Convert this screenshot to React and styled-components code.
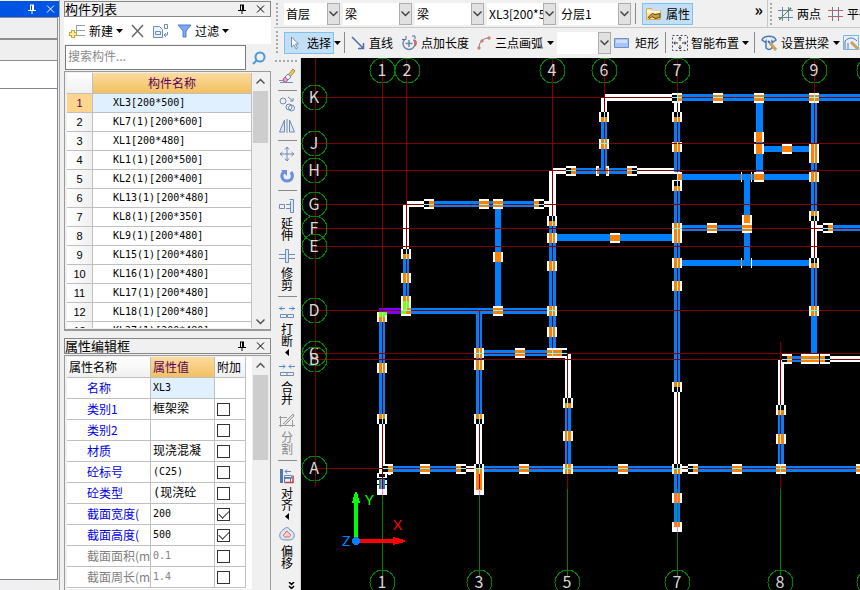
import React, { useState } from 'react';
import styled, { createGlobalStyle } from 'styled-components';

const GlobalStyle = createGlobalStyle`
  * { box-sizing: border-box; }
  body {
    margin: 0;
    overflow: hidden;
    background: #f0f0f0;
    font: 12px/16px "Noto Sans CJK SC", sans-serif;
    color: #000;
  }
  button, input, select { font: inherit; color: inherit; margin: 0; padding: 0; }
  button { background: none; border: 0; }
`;

const Shell = styled.div`
  display: grid;
  grid-template-columns: 60px 208px minmax(0, 1fr);
  grid-template-rows: minmax(0, 1fr);
  column-gap: 3px;
  height: 100vh;
`;

/* left navigation panel */
const Nav = styled.aside`
  display: flex;
  flex-direction: column;
  border-right: 1px solid #a0a0a0;
`;

const NavTitle = styled.header`
  display: flex;
  justify-content: flex-end;
  align-items: center;
  gap: 8px;
  height: 16px;
  margin-top: 1px;
  padding-right: 3px;
  background: #0054e3;
  color: #fff;
`;

const NavBar = styled.div`
  height: 22px;
  margin-right: 1px;
  background: #efefef;
  border: solid #8c8c8c;
  border-width: 1px 1px 1px 0;
`;

const NavBody = styled.div`
  flex: ${(p) => (p.$grow ? '1' : '0 0 28px')};
  background: #fff;
  border: solid #828790;
  border-width: 0 1px 1px 0;
  margin: ${(p) => (p.$grow ? '0 1px 10px 0' : '0 1px 0 0')};
`;

/* docked panels */
const Dock = styled.div`
  display: grid;
  grid-template-rows: minmax(0, 331px) minmax(0, 1fr);
  row-gap: 6px;
  padding-left: 1px;
`;

const Panel = styled.section`
  display: flex;
  flex-direction: column;
  min-height: 0;
`;

const PanelTitle = styled.header`
  display: flex;
  align-items: center;
  gap: 8px;
  flex: 0 0 16px;
  margin-top: 1px;
  padding-right: 4px;
  border: 1px solid #868686;
  h2 {
    flex: 1;
    margin: 0;
    font-size: 13px;
    font-weight: 400;
    line-height: 14px;
  }
`;

const TitleButton = styled.button`
  width: 10px;
  height: 10px;
  display: flex;
`;

const ListTools = styled.div`
  display: flex;
  align-items: center;
  flex: 0 0 27px;
  gap: 8px;
  padding-left: 5px;
  background: #fff;
`;

const Tool = styled.button`
  display: flex;
  align-items: center;
  gap: 3px;
  white-space: nowrap;
`;

const Search = styled.form`
  display: flex;
  flex: 0 0 25px;
  margin: 1px 0 1px 1px;
  input {
    flex: 1;
    min-width: 0;
    padding: 0 2px 3px;
    border: 1px solid #7a7a7a;
    background: #fff;
    outline: 0;
  }
  input::placeholder { color: #8a8a8a; opacity: 1; }
  button { width: 25px; display: grid; place-content: center; }
`;

const TableFrame = styled.div`
  display: flex;
  flex: 1;
  min-height: 0;
  overflow: hidden;
  margin-top: ${(p) => p.$top}px;
  padding: 1px 2px 0 2px;
  background: #f0f0f0;
  border: 1px solid #9a9a9a;
  border-bottom-width: ${(p) => (p.$open ? 0 : '2px')};
`;

const TableClip = styled.div`
  flex: 1;
  min-width: 0;
  overflow: hidden;
  background: #fff;
  margin-bottom: 1px;
`;

const Table = styled.table`
  width: ${(p) => p.$width || '100%'};
  table-layout: fixed;
  border-spacing: 0;
  th, td {
    height: ${(p) => p.$row}px;
    padding: 0 2px;
    border: solid #c0c0c0;
    border-width: 0 1px 1px 0;
    font-weight: 400;
    line-height: ${(p) => p.$row - 1}px;
    text-align: left;
    white-space: nowrap;
    overflow: hidden;
  }
  thead th {
    height: 21px;
    line-height: 20px;
    background: linear-gradient(#fff, #f0f0f0);
  }
`;

const ActiveHead = styled.th`
  &&& {
    background: linear-gradient(#fbdba0, #f2c060);
    color: #5c005c;
    text-align: ${(p) => (p.$center ? 'center' : 'left')};
  }
`;

const RowNumber = styled.th`
  && {
    text-align: center;
    background: ${(p) => (p.$on ? '#ffd58d' : 'linear-gradient(90deg, #fff, #f0f0f0)')};
    color: ${(p) => (p.$on ? '#5c005c' : '#000')};
    font: 11px/18px "Liberation Sans", sans-serif;
  }
`;

const Code = styled.td`
  && {
    padding-left: ${(p) => (p.$indent ? '20px' : '2px')};
    background: ${(p) => (p.$on ? '#e0f0ff' : '#fff')};
    color: ${(p) => (p.$dim ? '#808080' : '#000')};
    font-family: "DejaVu Sans Mono", "Noto Sans CJK SC", monospace;
    font-size: ${(p) => (p.$cjk ? '12px' : '10px')};
  }
`;

const PropName = styled.th`
  && {
    padding-left: 20px;
    padding-right: 0;
    color: ${(p) => (p.$dim ? '#808080' : '#0000e8')};
  }
`;

const Check = styled.input`
  appearance: none;
  display: grid;
  place-content: center;
  width: 13px;
  height: 13px;
  border: 1px solid #333;
  background: #fff;
  &:checked::after {
    content: '';
    width: 9px;
    height: 5px;
    border: solid #333;
    border-width: 0 0 1px 1px;
    transform: rotate(-45deg);
    margin-top: -3px;
  }
`;

const ScrollTrack = styled.div`
  display: flex;
  flex-direction: column;
  align-items: center;
  width: 15px;
  margin-left: ${(p) => p.$gap}px;
  padding: 5px 0 4px;
  background: #f0f0f0;
  color: #505050;
`;

const ScrollThumb = styled.div`
  width: 15px;
  height: ${(p) => p.$size}px;
  margin: 6px 0 auto;
  background: #cdcdcd;
`;

/* drawing area and its bars */
const Work = styled.main`
  display: grid;
  grid-template-rows: 28px 30px minmax(0, 1fr);
  min-width: 0;
`;

const Bar = styled.div`
  display: flex;
  align-items: center;
  min-width: 0;
  overflow: hidden;
  border-bottom: 1px solid ${(p) => (p.$line ? '#c8c8c8' : '#f0f0f0')};
`;

const Grip = styled.div`
  flex: 0 0 2px;
  align-self: stretch;
  margin: 3px 6px 2px 2px;
  background: repeating-linear-gradient(#a8a8a8 0 2px, #f0f0f0 2px 4px);
`;

const Combo = styled.div`
  display: flex;
  flex: none;
  width: ${(p) => p.$width}px;
  height: 22px;
  margin-right: 3px;
  background: #fff;
  select {
    appearance: none;
    flex: 1 1 0;
    width: 0;
    min-width: 0;
    padding: 0 0 0 2px;
    border: 0;
    background: #fff;
    outline: 0;
    overflow: hidden;
    text-overflow: clip;
  }
  span {
    display: grid;
    flex: none;
    place-content: center;
    width: 13px;
    background: #e1e1e1;
    border: 1px solid #adadad;
    color: #444;
  }
`;

const BarButton = styled.button`
  display: flex;
  align-items: center;
  flex: none;
  gap: ${(p) => p.$gap || 4}px;
  height: 22px;
  margin-right: ${(p) => p.$after || 0}px;
  padding: 0 ${(p) => (p.$on ? 2 : 0)}px;
  border: ${(p) => (p.$on ? '1px solid #7cc0f4' : '0')};
  background: ${(p) => (p.$on ? '#c2dff5' : 'none')};
  white-space: nowrap;
`;

const Divider = styled.i`
  flex: 0 0 1px;
  height: 21px;
  margin: 0 6px 0 ${(p) => p.$before || 2}px;
  background: #8a8a8a;
`;

const More = styled.button`
  margin: -10px 4px 0 auto;
  font-weight: 700;
  font-size: 16px;
`;

const SideBar = styled.div`
  display: flex;
  flex: none;
  align-items: center;
  align-self: stretch;
  width: 93px;
  overflow: hidden;
  border-left: 1px solid #c8c8c8;
`;

const Stage = styled.div`
  display: grid;
  grid-template-columns: 27px minmax(0, 1fr);
  grid-template-rows: minmax(0, 1fr);
  min-height: 0;
`;

const Strip = styled.div`
  display: flex;
  flex-direction: column;
  align-items: center;
  overflow: hidden;
  border-right: 1px solid #d8d8d8;
`;

const StripGrip = styled.div`
  flex: 0 0 2px;
  width: 24px;
  margin: 2px 0 3px;
  background: repeating-linear-gradient(90deg, #a8a8a8 0 2px, #f0f0f0 2px 4px);
`;

const StripButton = styled.button`
  display: flex;
  flex-direction: column;
  align-items: center;
  flex: none;
  width: 20px;
  height: ${(p) => (p.$menu ? 58 : p.$label ? 50 : 22)}px;
  padding-top: ${(p) => (p.$label ? 5 : 3)}px;
  color: ${(p) => (p.disabled ? '#8c8c8c' : '#000')};
  svg { flex: none; }
  span { width: 12px; margin: 3px 0 2px; line-height: 12px; word-break: break-all; }
`;

const StripLine = styled.i`
  flex: 0 0 1px;
  width: 19px;
  margin: 3px 0 2px;
  background: #8a8a8a;
`;

const StripMore = styled.button`
  display: flex;
  flex: none;
  margin: auto 0 1px 8px;
`;

const Drawing = styled.svg`
  display: block;
  width: 100%;
  height: 100%;
  background: #000;
`;

const Icon = ({ w = 16, h = 16, children }) => (
  <svg width={w} height={h} viewBox={`0 0 ${w} ${h}`} fill="none" stroke="#6f8cb4" aria-hidden="true">
    {children}
  </svg>
);

const Caret = () => (
  <svg width="7" height="4" viewBox="0 0 7 4" aria-hidden="true"><path d="M0 0h7L3.500 4z" fill="#000" /></svg>
);

const Chevron = ({ up }) => (
  <svg width="9" height="7" viewBox="0 0 9 7" fill="none" stroke="currentColor" strokeWidth="1.500" aria-hidden="true">
    <path d={up ? 'M.5 5.500l4-4 4 4' : 'M.5 1.500l4 4 4-4'} />
  </svg>
);

const PinClose = () => (
  <>
    <TitleButton aria-label="固定">
      <svg width="8" height="10" fill="none" stroke="currentColor"><path d="M2 1h4M2.500 1v5M5.500 1v5M4.500 1v5M0 6.500h8M4 7v3" /></svg>
    </TitleButton>
    <TitleButton aria-label="关闭">
      <svg width="9" height="10" fill="none" stroke="currentColor"><path d="M1 1.500l7 7M8 1.500l-7 7" /></svg>
    </TitleButton>
  </>
);

const icons = {
  add: (
    <Icon w={17} h={16}>
      <path d="M7 2.500h9M7 7.500h9M7 12.500h9M7.500 2v11" stroke="#8aa0bd" />
      <path d="M4 7v8M0 11h8" stroke="#c9a43c" strokeWidth="4" />
      <path d="M4 8v6M1 11h6" stroke="#fff0a0" strokeWidth="2" />
    </Icon>
  ),
  remove: <Icon w={13} h={14}><path d="M1 1l11 12M12 1L1 13" stroke="#666" strokeWidth="1.500" /></Icon>,
  copyList: (
    <Icon w={17} h={15}>
      <path d="M1.500 3.500h6l3 3v8h-9z" fill="#eef3fa" />
      <path d="M3.500 8.500h5v3h-5zM12.500 1.500h3v4h-3zM15.500 9v3h-3M14 10l-2 2 2 2" />
    </Icon>
  ),
  filter: (
    <Icon w={15} h={14}><path d="M1 1h13L9 7v6H6V7z" fill="#7fa8ee" stroke="#4f7fd0" /></Icon>
  ),
  search: (
    <Icon w={14} h={14}>
      <circle cx="8" cy="6" r="4.500" stroke="#4a9ad8" strokeWidth="2" />
      <path d="M5 9l-4 4" stroke="#4a9ad8" strokeWidth="2" />
    </Icon>
  ),
  pointer: (
    <Icon w={14}><path d="M4.500 2v10l2.500-2 2 4 1.500-1-2-4h3z" fill="#fff" /></Icon>
  ),
  line: <Icon w={14}><path d="M1 2l11 11M12.500 8v5.500H7" stroke="#4d6fa5" strokeWidth="1.500" /></Icon>,
  pointLen: (
    <Icon>
      <path d="M3.500 4.500a6 6 0 1 0 9 0M8 5v7M4.500 8.500h7" stroke="#6b86b0" strokeWidth="1.500" />
      <path d="M1 4.500h4V1M11 1h3v3" stroke="#4d6fa5" />
      <path d="M14 5l1 3-1 3" stroke="#d86a5a" strokeWidth="2" />
    </Icon>
  ),
  arc: (
    <Icon w={14}>
      <path d="M2 13C2 7 6 3 12 3" stroke="#6b86b0" />
      <path d="M1 12h2v2H1zM4 5h2v2H4zM11 2h2v2h-2z" stroke="#d86a5a" fill="#f5b0a0" />
    </Icon>
  ),
  property: (
    <Icon w={17} h={14}>
      <path d="M1.500 12.500v-11h5l1 2h8v9z" fill="#ffe49c" stroke="#d9a85a" />
      <path d="M2 4.500h13" stroke="#fff" strokeWidth="2" />
      <path d="M3 10.500l4-4 3 1 5-1v4l-5 1-3-2-2 2z" fill="#c9a03a" stroke="#5c4a1c" />
    </Icon>
  ),
  rect: (
    <Icon w={15} h={12}><path d="M.5 1.500h14v9H.5z" fill="#a9c4f4" stroke="#6d8fd0" /><path d="M2 3h11v3H2z" fill="#cfe0ff" stroke="none" /></Icon>
  ),
  smart: (
    <Icon>
      <path d="M.5.5h15v15H.5z" stroke="#446" strokeDasharray="2 2" />
      <path d="M8 2v4M8 10v4M2 8h4M10 8h4M6.500 3.500L8 2l1.500 1.500M6.500 12.500L8 14l1.500-1.500M3 6.500L2 8l1 1.500M13 6.500L14 8l-1 1.500" stroke="#334" />
    </Icon>
  ),
  arch: (
    <Icon>
      <path d="M1 5c2-5 12-5 14 0l-3 2-1-1v7c-2 2-4 2-6 0V6L4 7z" stroke="#5078b4" fill="#e6effb" strokeWidth="1.500" />
      <path d="M9 8l6 7" stroke="#c9a25c" strokeWidth="3" />
      <path d="M7 6l2 2" stroke="#4d6fa5" strokeWidth="2" />
    </Icon>
  ),
  curve: (
    <Icon w={17}>
      <path d="M.5.5h15v14H.5z" fill="#e6effb" stroke="#7cb4e0" />
      <path d="M2 14V6c4-4 8-4 12 0M5 14V8" stroke="#5078b4" />
      <path d="M8 7l7 7" stroke="#c9a25c" strokeWidth="3" />
    </Icon>
  ),
  twoPoint: (
    <Icon w={15}>
      <path d="M4.500 1v14M10.500 1v14M0 4.500h15M0 11.500h15" stroke="#6f85a8" />
      <path d="M1 14L13 2" stroke="#4d8a4d" />
      <path d="M2 12h1v1H2zM12 2h1v1h-1z" fill="#4d8a4d" stroke="#4d8a4d" />
    </Icon>
  ),
  parallel: (
    <Icon w={15}>
      <path d="M4.500 1v14M10.500 1v14" stroke="#5f7cab" />
      <path d="M0 4.500h15M0 10.500h15" stroke="#c0605c" />
    </Icon>
  ),
  erase: (
    <Icon>
      <path d="M9 7l5-6 2 2-5 6z" fill="#f0c860" stroke="#a88840" />
      <path d="M6 9l3-3 3 3-3 3z" fill="#e8f0fa" stroke="#6b86b0" />
      <path d="M4 11l2-2 3 3-2 2H5z" fill="#f09cc0" stroke="#b06088" />
      <path d="M0 12.500h4M1 14.500h13" />
    </Icon>
  ),
  copy: (
    <Icon>
      <circle cx="4" cy="5" r="3" /><circle cx="10" cy="11" r="3" /><circle cx="12.500" cy="12" r="3" />
      <path d="M9 1l5 4M14 2v3h-3" />
    </Icon>
  ),
  mirror: <Icon><path d="M5.500 2v12H.5zM10.500 2v12h5zM8 1v14" fill="#dbe7f7" /></Icon>,
  move: <Icon><path d="M8 1v14M1 8h14M6 3.500L8 1l2 2.500M6 12.500L8 15l2-2.500M3.500 6L1 8l2.500 2M12.500 6L15 8l-2.500 2" /></Icon>,
  rotate: (
    <Icon>
      <path d="M5 4C1 7 3 13 8 13s7-5 4-9" stroke="#6a90de" strokeWidth="3" />
      <path d="M2 2h6v6z" fill="#6a90de" stroke="none" />
    </Icon>
  ),
  extend: <Icon><path d="M.5 6.500h5v4h-5zM7 6.500h5M7 10.500h5" /><path d="M10.500 1.500h4v13h-3v-11" fill="#dbe7f7" /></Icon>,
  trim: <Icon><path d="M0 6.500h6M0 10.500h6M10 6.500h6M10 10.500h6" /><path d="M6.500 1.500h3v13h-3z" fill="#dbe7f7" /></Icon>,
  breakAt: (
    <Icon><path d="M0 4.500h6M10 4.500h6M3 2.500l-2 2 2 2M13 2.500l2 2-2 2" stroke="#4f86d8" /><path d="M1.500 10.500h6v3h-6zM8.500 10.500h6v3h-6z" /></Icon>
  ),
  merge: (
    <Icon><path d="M0 4.500h6M10 4.500h6M4 2.500l2 2-2 2M12 2.500l-2 2 2 2" stroke="#4f86d8" /><path d="M1.500 10.500h13v3h-13zM8 10.500v3" /></Icon>
  ),
  split: (
    <Icon><path d="M0 5.500h8M0 13.500h16M1.500 4v11M13.500 8v7M4 12l4-4 6-6 1 2-6 6-3 3" stroke="#999" fill="#ddd" /></Icon>
  ),
  align: (
    <Icon><path d="M1 1h3v14H1z" fill="#5078a8" stroke="none" /><path d="M6 3.500h6M8 1.500l-2 2 2 2" stroke="#4f86d8" /><path d="M5.500 7.500h7v3h-7z" /><path d="M5.500 14.500v-5h6v5z" stroke="#5078b4" /><path d="M6 14.500h8v-7" stroke="#c0404c" strokeWidth="1.500" /></Icon>
  ),
  offset: (
    <Icon>
      <path d="M5 3c2-2 5-2 6 1 3 1 5 4 4 7-1 3-4 3-7 3s-6 0-7-3c-1-3 1-6 4-8z" fill="#dbe7f7" />
      <path d="M7 5.500c2-1 2 1 3 2 2 0 2 3 0 3.500H6c-2-.5-2-3 0-3.500z" stroke="#d86a5a" fill="#f7cfc8" />
    </Icon>
  ),
};

const components = [
  'XL3[200*500]', 'KL7(1)[200*600]', 'XL1[200*480]', 'KL1(1)[200*500]', 'KL2(1)[200*400]',
  'KL13(1)[200*480]', 'KL8(1)[200*350]', 'KL9(1)[200*480]', 'KL15(1)[200*480]',
  'KL16(1)[200*480]', 'KL17(1)[200*480]', 'KL18(1)[200*480]', 'KL27(1)[200*480]',
];

const properties = [
  { name: '名称', value: 'XL3', active: true, noCheck: true },
  { name: '类别1', value: '框架梁', cjk: true },
  { name: '类别2', value: '' },
  { name: '材质', value: '现浇混凝', cjk: true },
  { name: '砼标号', value: '(C25)' },
  { name: '砼类型', value: '(现浇砼', cjk: true },
  { name: '截面宽度(', value: '200', checked: true },
  { name: '截面高度(', value: '500', checked: true },
  { name: '截面面积(m', value: '0.1', dim: true },
  { name: '截面周长(m', value: '1.4', dim: true },
];

const stripTools = [
  { id: 'erase' }, null,
  { id: 'copy' }, { id: 'mirror' }, null,
  { id: 'move' }, { id: 'rotate' }, null,
  { id: 'extend', label: '延伸' }, { id: 'trim', label: '修剪' }, null,
  { id: 'breakAt', label: '打断', menu: true },
  { id: 'merge', label: '合并' },
  { id: 'split', label: '分割', disabled: true }, null,
  { id: 'align', label: '对齐', menu: true },
  { id: 'offset', label: '偏移' },
];

// grid axes: [label, position]
const topAxes = [['1', 382], ['2', 407], ['4', 552], ['6', 604], ['7', 677], ['9', 814], ['10', 869]];
const bottomAxes = [['1', 382], ['3', 479], ['5', 567], ['7', 677], ['8', 780], ['9', 869]];
const rowAxes = [
  ['K', 97], ['J', 143], ['H', 170], ['G', 204], ['F', 228], ['E', 246],
  ['D', 310], ['C', 353], ['B', 359], ['A', 468],
];
// column lines: [x, from, to]
const columns = [
  [382, 58, 489], [406, 58, 311], [552, 58, 353], [604, 58, 170], [677, 58, 489],
  [814, 58, 311], [479, 311, 489], [567, 353, 489], [780, 342, 489],
];

const blue = '#0080ff';
const orange = '#ff8000';

// beams: [x, y, width, height]
const blueBeams = [
  [434, 201, 105, 6], [495, 204, 6, 106], [549, 221, 7, 132], [556, 234, 121, 7],
  [576, 168, 51, 6], [601, 122, 6, 46], [682, 94, 178, 7], [674, 122, 6, 264],
  [756, 98, 7, 79], [764, 146, 47, 6], [682, 174, 132, 6], [744, 177, 6, 85],
  [682, 225, 65, 6], [811, 98, 6, 118], [833, 225, 27, 6], [682, 260, 129, 6],
  [811, 268, 6, 87], [401, 308, 151, 6], [403, 259, 6, 45], [379, 322, 6, 92],
  [476, 311, 6, 106], [484, 350, 68, 6], [565, 408, 6, 60], [778, 415, 6, 53],
  [393, 466, 67, 6], [484, 466, 190, 6], [698, 466, 162, 6], [674, 473, 6, 50],
  [792, 356, 22, 6],
];
const whiteBeams = [
  [406, 201, 18, 6], [403, 205, 6, 44], [544, 201, 8, 6], [549, 171, 7, 45],
  [552, 168, 14, 6], [601, 98, 6, 14], [605, 94, 67, 7], [637, 168, 37, 6],
  [674, 103, 6, 9], [811, 221, 6, 37], [817, 225, 6, 6], [565, 354, 6, 44],
  [830, 356, 30, 6], [778, 360, 6, 45], [379, 424, 6, 49], [476, 424, 6, 40],
  [674, 392, 6, 72], [466, 466, 8, 6], [682, 466, 6, 6],
];

// hinges: [centre x, centre y, direction, open side]
const marks = [
  [429, 204, 'h', 'l'], [484, 204, 'h'], [498, 204, 'h'], [539, 204, 'h', 'r'],
  [552, 221, 'v', 't'], [552, 238, 'v'], [406, 254, 'v', 't'], [498, 257, 'v'],
  [571, 171, 'h', 'l'], [604, 117, 'v', 't'], [604, 144, 'v'], [632, 171, 'h', 'r'],
  [677, 98, 'h', 'l'], [677, 117, 'v', 't'], [677, 147, 'v'], [677, 177, 'h', 'l'],
  [677, 186, 'v', 't'], [677, 228, 'v'], [677, 238, 'v'], [718, 98, 'h'], [759, 98, 'h'],
  [814, 98, 'h'], [759, 137, 'v'], [759, 149, 'v'], [759, 177, 'h'], [787, 149, 'h'],
  [814, 149, 'v'], [814, 158, 'v'], [814, 177, 'v'], [747, 220, 'v'], [747, 228, 'h'],
  [712, 228, 'h'], [814, 216, 'v', 'b'], [828, 228, 'h', 'l'], [615, 238, 'h'],
  [677, 263, 'v'], [677, 286, 'v'], [814, 263, 'v', 't'], [814, 311, 'v'],
  [677, 387, 'v', 'b'], [787, 359, 'h', 'l'], [806, 359, 'h'], [814, 359, 'h'],
  [825, 359, 'h', 'r'], [781, 410, 'v', 't'], [406, 278, 'v'], [382, 368, 'v'],
  [382, 419, 'v', 'b'], [498, 311, 'h'], [552, 266, 'v'], [552, 311, 'v'],
  [552, 332, 'v'], [562, 353, 'h', 'r'], [552, 353, 'h'], [479, 353, 'v'],
  [479, 365, 'v'], [479, 419, 'v', 'b'], [520, 353, 'h'], [568, 403, 'v', 't'],
  [568, 436, 'v'], [388, 469, 'h', 'l'], [425, 469, 'h'], [461, 469, 'h', 'r'],
  [479, 469, 'v', 't'], [524, 469, 'h'], [568, 469, 'v'], [623, 469, 'h'], [677, 469, 'v', 't'],
  [693, 469, 'h', 'l'], [737, 469, 'h'], [781, 469, 'h'], [781, 439, 'v'], [861, 469, 'h'],
  [677, 498, 'v'],
];

const Mark = ({ x, y, dir, open }) => {
  const upright = dir === 'v';
  const core = upright ? [x - 3, y - 5, 6, 10] : [x - 5, y - 3, 10, 6];
  const half = {
    t: [x - 3, y - 5, 6, 5], b: [x - 3, y, 6, 5], l: [x - 5, y - 3, 5, 6], r: [x, y - 3, 5, 6],
  }[open];
  return (
    <>
      <rect x={x - 5} y={y - 5} width="10" height="10" fill="#fff" />
      <rect x={core[0]} y={core[1]} width={core[2]} height={core[3]} fill={orange} />
      {half && <rect x={half[0]} y={half[1]} width={half[2]} height={half[3]} fill="#000" />}
    </>
  );
};

const Bubble = ({ x, y, label }) => (
  <>
    <circle cx={x + 0.5} cy={y + 0.5} r="12.500" fill="none" stroke="#008000" />
    <text x={x} y={y + 6} textAnchor="middle" fill="#d8d8d8">{label}</text>
  </>
);

const Plan = () => (
  <Drawing role="img" aria-label="首层梁平面图">
    <g transform="translate(-301 -58)" shapeRendering="crispEdges" fontFamily='"Noto Sans CJK SC", sans-serif' fontSize="16">
      {blueBeams.map(([x, y, w, h]) => <rect key={`${x}-${y}`} x={x} y={y} width={w} height={h} fill={blue} />)}
      {whiteBeams.map(([x, y, w, h]) => <rect key={`${x}-${y}`} x={x} y={y} width={w} height={h} fill="#fff" />)}
      <rect x="379" y="308" width="24" height="6" fill="#8000ff" />
      {marks.map(([x, y, dir, open]) => <Mark key={`${x}-${y}`} x={x} y={y} dir={dir} open={open} />)}

      {/* beam crossings drawn through their hinges */}
      <path d="M596 166h3v10h-3zM606 166h3v10h-3zM741 172h1v10h-1zM751 172h1v10h-1zM741 258h1v10h-1zM751 258h1v10h-1z" fill="#fff" />
      <path d="M597 168h2v6h-2zM606 168h2v6h-2zM741 174h1v6h-1zM751 174h1v6h-1zM741 260h1v6h-1z" fill={orange} />

      {/* selected beam XL3 */}
      <rect x="401" y="296" width="10" height="20" fill="#fff" />
      <rect x="403" y="296" width="6" height="5" fill={orange} />
      <path d="M403 301h6v7h-3v6h-5v-4h2z" fill="#80ff00" />
      <rect x="406" y="308" width="5" height="6" fill={orange} />
      <rect x="377" y="312" width="10" height="10" fill="#fff" />
      <rect x="379" y="312" width="8" height="3" fill="#80ff00" />
      <rect x="379" y="314" width="6" height="3" fill="#80ff00" />
      <rect x="379" y="317" width="6" height="5" fill={orange} />

      {/* cantilever ends */}
      <path d="M377 473h10v22h-10zM388 472h3v3h-3zM474 474h10v21h-10zM672 522h10v10h-10z" fill="#fff" />
      <path d="M379 474h6v3h-6zM377 478h10v2h-10zM377 484h10v1h-10z" fill="#000" />
      <path d="M379 479h6v10h-6z" fill={blue} />
      <path d="M381 479h2v10h-2zM476 474h6v16h-6zM674 522h6v5h-6z" fill={orange} />

      <g fill="#800000">
        <rect x="315" y="58" width="1" height="429" />
        {rowAxes.map(([label, y]) => <rect key={label} x="314" y={y} width="546" height="1" />)}
        {columns.map(([x, y, end]) => <rect key={x} x={x} y={y} width="1" height={end - y} />)}
      </g>
      <g fill="#80ffff">
        {marks.map(([x, y]) => {
          const col = columns.find(([cx, from, to]) => Math.abs(cx - x) < 3 && y >= from - 3 && y <= to);
          const row = rowAxes.find((r) => Math.abs(r[1] - y) < 3);
          return (
            <g key={`${x}-${y}`}>
              {col && <rect x={col[0]} y={y - 5} width="1" height="10" />}
              {row && <rect x={x - 5} y={row[1]} width="10" height="1" />}
            </g>
          );
        })}
        <path d="M382 312h1v10h-1zM406 296h1v14h-1zM401 310h10v1h-10z" />
      </g>
      <g fill="#008000">
        {[382, 479, 567, 677, 780].map((x) => <rect key={x} x={x} y="489" width="1" height="88" />)}
      </g>
      <path d="M382 489h1v6h-1zM479 489h1v6h-1zM677 493h1v10h-1zM677 522h1v10h-1z" fill="#ff80ff" />

      {topAxes.map(([label, x]) => <Bubble key={label} x={x} y={70} label={label} />)}
      {bottomAxes.map(([label, x]) => <Bubble key={label} x={x} y={582} label={label} />)}
      {rowAxes.map(([label, y]) => <Bubble key={label} x={314} y={y} label={label} />)}

      {/* coordinate triad */}
      <path d="M354 540v-37h-2l3-11h2l3 11h-2v37z" fill="#00ff00" />
      <path d="M358 539h35v-2l12 3v2l-12 3v-2h-35z" fill="#ff0000" />
      <circle cx="356" cy="541" r="4" fill={blue} />
      <g fontFamily="Lato, sans-serif" fontSize="14">
        <text x="365" y="505" fill="#00ff00">Y</text>
        <text x="393" y="530" fill="#ff0000">X</text>
        <text x="342" y="546" fill={blue}>Z</text>
      </g>
    </g>
  </Drawing>
);

const Select = ({ label, value, width }) => (
  <Combo $width={width}>
    <select aria-label={label} defaultValue={value}><option>{value}</option></select>
    <span><Chevron /></span>
  </Combo>
);

const App = () => {
  const [selected, setSelected] = useState(0);
  const [extra, setExtra] = useState(properties.map((p) => Boolean(p.checked)));
  const toggle = (i) => setExtra((prev) => prev.map((on, n) => (n === i ? !on : on)));

  return (
    <Shell>
      <GlobalStyle />
      <Nav>
        <NavTitle><PinClose /></NavTitle>
        <NavBar />
        <NavBar />
        <NavBody />
        <NavBody $grow />
      </Nav>

      <Dock>
        <Panel>
          <PanelTitle><h2>构件列表</h2><PinClose /></PanelTitle>
          <ListTools>
            <Tool>{icons.add}新建<Caret /></Tool>
            <Tool aria-label="删除">{icons.remove}</Tool>
            <Tool aria-label="复制">{icons.copyList}</Tool>
            <Tool>{icons.filter}过滤<Caret /></Tool>
          </ListTools>
          <Search onSubmit={(e) => e.preventDefault()}>
            <input type="text" aria-label="搜索构件" placeholder="搜索构件..." />
            <button type="submit" aria-label="搜索">{icons.search}</button>
          </Search>
          <TableFrame $top={0}>
            <TableClip>
              <Table $row={19}>
                <colgroup><col width="26" /><col /></colgroup>
                <thead>
                  <tr><th aria-label="序号" /><ActiveHead $center>构件名称</ActiveHead></tr>
                </thead>
                <tbody>
                  {components.map((name, i) => (
                    <tr key={name} onClick={() => setSelected(i)}>
                      <RowNumber $on={i === selected}>{i + 1}</RowNumber>
                      <Code $indent $on={i === selected}>{name}</Code>
                    </tr>
                  ))}
                </tbody>
              </Table>
            </TableClip>
            <ScrollTrack $gap={1}><Chevron up /><ScrollThumb $size={52} /><Chevron /></ScrollTrack>
          </TableFrame>
        </Panel>

        <Panel>
          <PanelTitle><h2>属性编辑框</h2><PinClose /></PanelTitle>
          <TableFrame $top={1} $open>
            <TableClip>
              <Table $row={21} $width="179px">
                <colgroup><col width="84" /><col width="64" /><col width="31" /></colgroup>
                <thead>
                  <tr><th>属性名称</th><ActiveHead>属性值</ActiveHead><th>附加</th></tr>
                </thead>
                <tbody>
                  {properties.map((p, i) => (
                    <tr key={p.name}>
                      <PropName $dim={p.dim}>{p.name}</PropName>
                      <Code $on={p.active} $dim={p.dim} $cjk={p.cjk}>{p.value}</Code>
                      <td>
                        {!p.noCheck && (
                          <Check type="checkbox" aria-label={`附加 ${p.name}`} checked={extra[i]} onChange={() => toggle(i)} />
                        )}
                      </td>
                    </tr>
                  ))}
                </tbody>
              </Table>
            </TableClip>
            <ScrollTrack $gap={1}><Chevron up /><ScrollThumb $size={85} /></ScrollTrack>
          </TableFrame>
        </Panel>
      </Dock>

      <Work>
        <Bar $line>
          <Grip />
          <Select label="楼层" value="首层" width={56} />
          <Select label="类别" value="梁" width={69} />
          <Select label="构件类型" value="梁" width={69} />
          <Select label="构件" value="XL3[200*500]" width={69} />
          <Select label="分层" value="分层1" width={72} />
          <Divider $before={1} />
          <BarButton $on>{icons.property}属性</BarButton>
          <More aria-label="更多">»</More>
          <SideBar>
            <Grip />
            <BarButton $after={7}>{icons.twoPoint}两点</BarButton>
            <BarButton>{icons.parallel}平行</BarButton>
          </SideBar>
        </Bar>
        <Bar>
          <Grip />
          <BarButton $on $gap={6}>{icons.pointer}选择</BarButton>
          <Caret />
          <Divider $before={3} />
          <BarButton $after={8}>{icons.line}直线</BarButton>
          <BarButton $after={8}>{icons.pointLen}点加长度</BarButton>
          <BarButton $after={3}>{icons.arc}三点画弧<Caret /></BarButton>
          <Select label="圆弧方向" value="" width={54} />
          <BarButton $gap={6} $after={4}>{icons.rect}矩形</BarButton>
          <Divider />
          <BarButton $gap={3} $after={3}>{icons.smart}智能布置<Caret /></BarButton>
          <Divider />
          <BarButton $after={3}>{icons.arch}设置拱梁<Caret /></BarButton>
          <BarButton aria-label="曲线">{icons.curve}</BarButton>
        </Bar>
        <Stage>
          <Strip>
            <StripGrip />
            {stripTools.map((t, i) => (t ? (
              <StripButton key={t.id} aria-label={t.label || t.id} $label={t.label} $menu={t.menu} disabled={t.disabled}>
                {icons[t.id]}
                {t.label && <span>{t.label}</span>}
                {t.menu && <svg width="4" height="7"><path d="M4 0v7L0 3.500z" /></svg>}
              </StripButton>
            ) : <StripLine key={`line-${i}`} />))}
            <StripMore aria-label="更多工具">
              <svg width="7" height="7" fill="none" stroke="#000" strokeWidth="1.500"><path d="M1 0l2.500 2.500L6 0M1 4l2.500 2.500L6 4" /></svg>
            </StripMore>
          </Strip>
          <Plan />
        </Stage>
      </Work>
    </Shell>
  );
};

export default App;
